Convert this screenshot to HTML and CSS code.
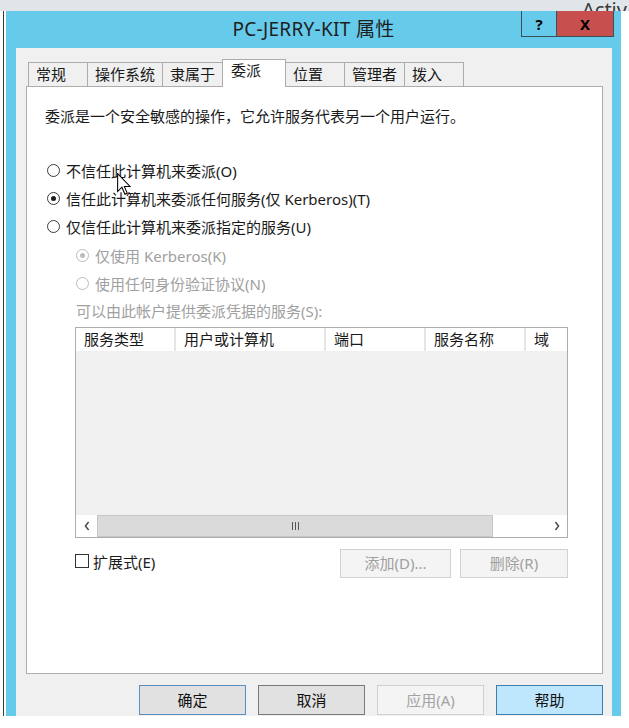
FILE: index.html
```html
<!DOCTYPE html>
<html lang="zh-CN">
<head>
<meta charset="utf-8">
<title>PC-JERRY-KIT 属性</title>
<link rel="stylesheet" href="styles.css">
</head>
<body>
<div class="screen">
  <div class="desk-top"><span class="activ">Activ</span></div>
  <div class="desk">
    <div class="edge"></div>
    <div class="window">
      <div class="titlebar">
        <div class="title">PC-JERRY-KIT 属性</div>
        <div class="caps">
          <div class="cap help">?</div>
          <div class="cap close">X</div>
        </div>
      </div>
      <div class="panel">
        <div class="tabs">
          <div class="tab">常规</div>
          <div class="tab">操作系统</div>
          <div class="tab">隶属于</div>
          <div class="tab on">委派</div>
          <div class="tab">位置</div>
          <div class="tab">管理者</div>
          <div class="tab">拨入</div>
        </div>
        <div class="page">
          <div class="desc">委派是一个安全敏感的操作，它允许服务代表另一个用户运行。</div>
          <div class="opts">
            <div class="opt"><span class="radio"></span><span>不信任此计算机来委派(O)</span></div>
            <div class="opt"><span class="radio checked"></span><span>信任此计算机来委派任何服务(仅 Kerberos)(T)</span></div>
            <div class="opt"><span class="radio"></span><span>仅信任此计算机来委派指定的服务(U)</span></div>
          </div>
          <div class="sub">
            <div class="opt disabled"><span class="radio checked"></span><span>仅使用 Kerberos(K)</span></div>
            <div class="opt disabled"><span class="radio"></span><span>使用任何身份验证协议(N)</span></div>
            <div class="lbl disabled">可以由此帐户提供委派凭据的服务(S):</div>
            <div class="list">
              <div class="lhead">
                <span>服务类型</span><span>用户或计算机</span><span>端口</span><span>服务名称</span><span>域</span>
              </div>
              <div class="lbody"></div>
              <div class="hscroll">
                <div class="sbtn"><svg width="6" height="10" viewBox="0 0 6 10"><polyline points="4.6,1 1.4,5 4.6,9" fill="none" stroke="#444" stroke-width="1.4"/></svg></div>
                <div class="thumb"><span class="grip"><i></i><i></i><i></i></span></div>
                <div class="track"></div>
                <div class="sbtn right"><svg width="6" height="10" viewBox="0 0 6 10"><polyline points="1.4,1 4.6,5 1.4,9" fill="none" stroke="#444" stroke-width="1.4"/></svg></div>
              </div>
            </div>
            <div class="row2">
              <div class="check"><span class="cbox"></span><span>扩展式(E)</span></div>
              <div class="sbtns">
                <div class="dbtn add">添加(D)...</div>
                <div class="dbtn del">删除(R)</div>
              </div>
            </div>
          </div>
        </div>
        <div class="dlg-btns">
          <div class="btn default">确定</div>
          <div class="btn focus">取消</div>
          <div class="btn disabled">应用(A)</div>
          <div class="btn hot">帮助</div>
        </div>
      </div>
    </div>
  </div>
  <svg class="cursor" width="14" height="22" viewBox="0 0 12 19"><path d="M0.5 0.5 L0.5 16 L4.2 12.3 L6.8 18.3 L8.8 17.4 L6.3 11.6 L11.2 11.6 Z" fill="#fff" stroke="#000" stroke-width="0.9" stroke-linejoin="miter"/></svg>
</div>
</body>
</html>
```
FILE: styles.css
```css
* { box-sizing: border-box; }
html, body { margin: 0; padding: 0; background: #fff; }
body {
  font-family: "Noto Sans", "Noto Sans CJK SC", sans-serif;
  font-size: 15px;
  color: #1a1a1a;
}
.screen {
  width: 629px;
  height: 728px;
  overflow: hidden;
  background: #fff;
  position: relative;
}
.desk-top {
  height: 11px;
  background: #dfe5e8;
  overflow: hidden;
  display: flex;
  justify-content: flex-end;
}
.activ {
  width: 47px;
  height: 11px;
  font-size: 20px;
  line-height: 20px;
  padding-top: 0;
  color: #3a3a3a;
  white-space: nowrap;
  overflow: hidden;
}
.desk {
  display: flex;
  height: 705px;
}
.edge {
  width: 4px;
  margin-right: 2px;
  border-right: 1px solid #3a3a3a;
}
.window {
  width: 615px;
  background: #66caeb;
  display: flex;
  flex-direction: column;
}
.titlebar {
  height: 37px;
  display: grid;
}
.title, .caps { grid-area: 1 / 1; }
.title {
  text-align: center;
  font-size: 19px;
  letter-spacing: 0.3px;
  line-height: 37px;
  color: #1e1e1e;
}
.caps {
  justify-self: end;
  align-self: start;
  margin-right: 7px;
  display: flex;
  height: 26px;
}
.cap {
  height: 26px;
  border: 1px solid #3b4f59;
  border-top: none;
  display: flex;
  align-items: center;
  justify-content: center;
  font-weight: bold;
  color: #000;
}
.cap.help { width: 36px; font-size: 15px; }
.cap.close { width: 57px; background: #c7504f; border-left: none; font-size: 15px; }
.panel {
  margin: 0 9px 0 10px;
  flex: 1;
  background: #f0f0f0;
  padding: 11px 9px 0 10px;
  overflow: hidden;
}
.tabs {
  display: flex;
  align-items: flex-end;
  height: 27px;
  padding-left: 2px;
  position: relative;
  z-index: 1;
}
.tab {
  height: 24px;
  min-width: 60px;
  padding: 1px 7px 0 7px;
  border: 1px solid #acacac;
  border-bottom: none;
  background: #f0f0f0;
  line-height: 21px;
  white-space: nowrap;
}
.tab + .tab { margin-left: -1px; }
.tab.on {
  height: 28px;
  min-width: 64px;
  margin-bottom: -1px;
  padding: 0 8px 0 8px;
  background: #fff;
  position: relative;
  z-index: 2;
}
.page {
  height: 588px;
  border: 1px solid #acacac;
  background: #fff;
  padding: 19px 0 0 18px;
}
.desc { line-height: 20px; }
.opts { margin-top: 30px; }
.opt {
  height: 28px;
  display: flex;
  align-items: center;
  gap: 6px;
  white-space: nowrap;
}
.radio {
  flex: none;
  width: 13px;
  height: 13px;
  margin-left: 2px;
  border: 1px solid #3c3c3c;
  border-radius: 50%;
  background: #fff;
  display: flex;
  align-items: center;
  justify-content: center;
}
.radio.checked::after {
  content: "";
  width: 5px;
  height: 5px;
  border-radius: 50%;
  background: #1e1e1e;
}
.disabled { color: #a0a0a0; }
.disabled .radio { border-color: #bcbcbc; }
.disabled .radio.checked::after { background: #bcbcbc; }
.sub { margin-left: 30px; margin-top: 1px; }
.sub .radio { margin-left: 1px; }
.lbl { height: 28px; line-height: 28px; padding-left: 1px; }
.list {
  margin-top: 2px;
  width: 493px;
  height: 211px;
  border: 1px solid #acacac;
  background: #f0f0f0;
  display: flex;
  flex-direction: column;
}
.lhead {
  height: 23px;
  background: #fff;
  display: grid;
  grid-template-columns: 100px 150px 100px 100px 1fr;
}
.lhead span {
  border-right: 2px solid #e6e6e6;
  padding-left: 8px;
  line-height: 22px;
  white-space: nowrap;
}
.lhead span:last-child { border-right: none; }
.lbody { flex: 1; }
.hscroll {
  height: 22px;
  display: flex;
  background: #fff;
}
.sbtn {
  width: 21px;
  display: flex;
  align-items: center;
  justify-content: center;
  background: #fff;
}
.sbtn.right { width: 20px; }
.thumb {
  width: 396px;
  background: #dadada;
  border: 1px solid #c6c6c6;
  display: flex;
  align-items: center;
  justify-content: center;
}
.grip { display: flex; gap: 2px; }
.grip i { display: block; width: 1px; height: 8px; background: #555; }
.track { flex: 1; background: #fff; }
.row2 {
  margin-top: 11px;
  width: 493px;
  display: flex;
  align-items: flex-start;
}
.check {
  height: 24px;
  display: flex;
  align-items: center;
  gap: 4px;
}
.cbox {
  width: 14px;
  height: 14px;
  border: 1px solid #333;
  background: #fff;
}
.sbtns { margin-left: auto; display: flex; gap: 9px; }
.dbtn {
  height: 29px;
  border: 1px solid #d2d2d2;
  background: #f4f4f4;
  color: #a0a0a0;
  text-align: center;
  line-height: 27px;
}
.dbtn.add { width: 111px; }
.dbtn.del { width: 108px; }
.dlg-btns {
  margin-top: 11px;
  display: flex;
  justify-content: flex-end;
  gap: 12px;
}
.btn {
  width: 107px;
  height: 30px;
  border: 1px solid #adadad;
  background: #e1e1e1;
  text-align: center;
  line-height: 28px;
  color: #111;
}
.btn.default { border-color: #5a8fc2; }
.btn.focus { border-color: #7a7a7a; }
.btn.disabled { background: #f4f4f4; border-color: #d0d0d0; color: #a3a3a3; }
.btn.hot { background: #bee6fd; border-color: #3c7fb1; }
.cursor {
  position: absolute;
  left: 117px;
  top: 173px;
}
```
